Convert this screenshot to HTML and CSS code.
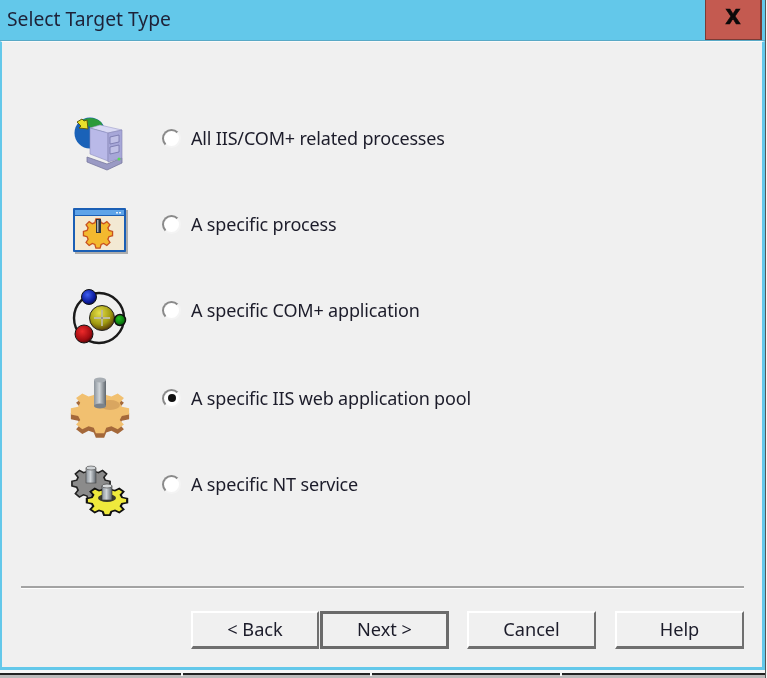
FILE: index.html
```html
<!DOCTYPE html>
<html lang="en">
<head>
<meta charset="utf-8">
<title>Select Target Type</title>
<link rel="stylesheet" href="styles.css">
</head>
<body>
<svg class="defs" width="0" height="0" aria-hidden="true">
  <defs>
    <linearGradient id="pin" x1="0" x2="1" y1="0" y2="0">
      <stop offset="0" stop-color="#8b939b"/><stop offset=".45" stop-color="#cfd4d8"/><stop offset="1" stop-color="#5f666d"/>
    </linearGradient>
    <radialGradient id="ballBlue" cx=".4" cy=".35" r=".7"><stop offset="0" stop-color="#3f5ff0"/><stop offset=".7" stop-color="#0a1a9c"/><stop offset="1" stop-color="#050a40"/></radialGradient>
    <radialGradient id="ballRed" cx=".4" cy=".35" r=".7"><stop offset="0" stop-color="#ee2a2a"/><stop offset=".7" stop-color="#a00b10"/><stop offset="1" stop-color="#400508"/></radialGradient>
    <radialGradient id="ballGreen" cx=".4" cy=".35" r=".7"><stop offset="0" stop-color="#22c022"/><stop offset="1" stop-color="#045a08"/></radialGradient>
    <radialGradient id="ballGold" cx=".4" cy=".3" r=".75"><stop offset="0" stop-color="#e6e04a"/><stop offset=".6" stop-color="#a09a10"/><stop offset="1" stop-color="#4a2a08"/></radialGradient>
    <path id="gear8" d="M-4-25h8l2 7 5 2 6-4 6 6-4 6 2 5 7 2v8l-7 2-2 5 4 6-6 6-6-4-5 2-2 7h-8l-2-7-5-2-6 4-6-6 4-6-2-5-7-2v-8l7-2 2-5-4-6 6-6 6 4 5-2z"/>
  </defs>
</svg>
<div class="window">
  <header class="titlebar">
    <h1 class="title">Select Target Type</h1>
    <div class="close">x</div>
  </header>
  <main class="panel">
    <div class="options">
      <div class="option">
        <svg class="icon" viewBox="0 0 56 56">
          <circle cx="18" cy="17" r="15.500" fill="#1a62b8"/>
          <path d="M9 5c6-4 14-4 20 1l4 8-10 3-6-7-9 1z" fill="#2c9a3a"/>
          <path d="M5 6l5-3 2 2 3-1 1 9-9-1 2-2z" fill="#e9e02c" stroke="#5f5c10" stroke-width="1"/>
          <path d="M15 41v5l20 8 15-7v-5l-15 6z" fill="#9a9ac4" stroke="#77779e" stroke-width=".8"/>
          <path d="M18 12l10-3 22 5-14 3z" fill="#d9d9f4" stroke="#9a9ac8" stroke-width=".6"/>
          <path d="M18 12l18 5v28l-18-7z" fill="#b9b9e8" stroke="#8e8ebc" stroke-width=".6"/>
          <path d="M36 17l14-3v28l-14 4z" fill="#a7a7d8" stroke="#8484b4" stroke-width=".6"/>
          <path d="M38 21l9-2v7l-9 2zM38 31l9-2v7l-9 2z" fill="#c0c0e6" stroke="#7474aa" stroke-width=".8"/>
          <circle cx="47" cy="43" r="1.500" fill="#58d858"/>
        </svg>
        <label class="choice"><span class="radio"></span><span>All IIS/COM+ related processes</span></label>
      </div>
      <div class="option">
        <svg class="icon" viewBox="0 0 56 56">
          <rect x="3" y="8" width="53" height="44" fill="#777" opacity=".55"/>
          <rect x="1" y="6" width="53" height="44" rx="1" fill="#1b5fb5"/>
          <rect x="3" y="8" width="49" height="5" fill="#5fa4e8"/>
          <path d="M44 10h2v1.500h-2zM47 10h2v1.500h-2z" fill="#e8f2fb"/>
          <rect x="3" y="14" width="49" height="34" fill="#f3e9d3"/>
          <g transform="translate(26 30) scale(.52)" fill="#f3b92f" stroke="#c8501e" stroke-width="2.500"><use href="#gear8"/></g>
          <rect x="24" y="17" width="5" height="14" fill="#2f343a"/>
          <rect x="25" y="18" width="1.500" height="12" fill="#a8aeb4"/>
        </svg>
        <label class="choice"><span class="radio"></span><span>A specific process</span></label>
      </div>
      <div class="option">
        <svg class="icon" viewBox="0 0 56 56">
          <circle cx="27" cy="30" r="25" fill="none" stroke="#1a1a1a" stroke-width="2.400"/>
          <circle cx="30" cy="30" r="12.500" fill="url(#ballGold)" stroke="#222" stroke-width="1"/>
          <path d="M30 22v16M22 30h16" stroke="#f4f0c8" stroke-width="1.800"/>
          <path d="M30 22v16M22 30h16" stroke="#222" stroke-width=".5"/>
          <circle cx="17" cy="9" r="7.500" fill="url(#ballBlue)" stroke="#111" stroke-width="1"/>
          <circle cx="12" cy="46" r="9" fill="url(#ballRed)" stroke="#111" stroke-width="1"/>
          <circle cx="48" cy="32" r="5.500" fill="url(#ballGreen)" stroke="#111" stroke-width="1.500"/>
        </svg>
        <label class="choice"><span class="radio"></span><span>A specific COM+ application</span></label>
      </div>
      <div class="option option-shifted">
        <svg class="icon" viewBox="0 0 56 56">
          <g transform="translate(28 33) scale(1.040 .780)">
            <g transform="translate(0 6)" fill="#a4683a"><use href="#gear8"/></g>
            <g fill="#f1c070"><use href="#gear8"/></g>
          </g>
          <ellipse cx="38" cy="29" rx="10" ry="5" fill="#d9a660"/>
          <rect x="22" y="4" width="12" height="26" fill="url(#pin)"/>
          <ellipse cx="28" cy="30" rx="6" ry="2.500" fill="#7b828a"/>
          <ellipse cx="28" cy="4" rx="6" ry="2.500" fill="#a7adb3"/>
        </svg>
        <label class="choice"><span class="radio radio-on"></span><span>A specific IIS web application pool</span></label>
      </div>
      <div class="option">
        <svg class="icon" viewBox="0 0 56 56">
          <g transform="translate(19 20) scale(.680 .580)" fill="#8b8b8b" stroke="#222" stroke-width="2.500"><use href="#gear8"/></g>
          <rect x="14" y="6" width="10" height="15" fill="url(#pin)" stroke="#444" stroke-width=".6"/>
          <ellipse cx="19" cy="6" rx="5" ry="2" fill="#cfd3d6" stroke="#444" stroke-width=".6"/>
          <g transform="translate(35 37) scale(.720 .520)" fill="#efe93c" stroke="#111" stroke-width="3"><use href="#gear8"/></g>
          <ellipse cx="35" cy="36" rx="9" ry="4" fill="#3a3a2a"/>
          <rect x="30" y="24" width="10" height="14" fill="url(#pin)" stroke="#333" stroke-width=".6"/>
          <ellipse cx="35" cy="24" rx="5" ry="2" fill="#d5d8da" stroke="#333" stroke-width=".6"/>
        </svg>
        <label class="choice"><span class="radio"></span><span>A specific NT service</span></label>
      </div>
    </div>
    <div class="footer">
      <hr class="rule">
      <div class="buttons">
        <div class="pair">
          <button class="btn btn-back" type="button">&lt; Back</button>
          <button class="btn btn-default" type="button">Next &gt;</button>
        </div>
        <button class="btn" type="button">Cancel</button>
        <button class="btn" type="button">Help</button>
      </div>
    </div>
  </main>
  <div class="base"></div>
</div>
</body>
</html>
```

FILE: styles.css
```css
* { box-sizing: border-box; }
html, body { margin: 0; padding: 0; background: #f6f6f6; }
.defs { position: absolute; }
.window {
  width: 766px;
  height: 678px;
  display: flex;
  flex-direction: column;
  font-family: "Noto Sans", "Open Sans", sans-serif;
  color: #1c1c2a;
  border-right: 1px solid #555;
  filter: blur(.3px);
}
.titlebar {
  height: 41px;
  flex: none;
  display: flex;
  justify-content: space-between;
  background: #63c8ea;
  border-bottom: 1px solid #58a9c6;
  padding-right: 3px;
}
.title {
  margin: 0;
  padding: 6px 0 0 7px;
  font-size: 19.3px;
  line-height: 26px;
  font-weight: 400;
  color: #1e2238;
}
.close {
  width: 57px;
  height: 40px;
  background: #c45a50;
  border: 1px solid #7b3b35;
  border-width: 0 2px 1px 1px;
  text-align: center;
  font-family: "Liberation Sans", sans-serif;
  font-weight: 700;
  font-size: 27px;
  line-height: 31px;
  color: #0c0a0a;
  -webkit-text-stroke: .6px #0c0a0a;
}
.panel {
  flex: none;
  height: 629px;
  display: flex;
  flex-direction: column;
  justify-content: space-between;
  background: #f0f0f0;
  border: 2px solid #63c8ea;
  border-top: 1px solid #fafafa;
  border-right-width: 3px;
  border-bottom-width: 3px;
}
.options {
  padding: 53px 0 0 70px;
  display: flex;
  flex-direction: column;
}
.option {
  height: 86px;
  display: flex;
  align-items: center;
}
.option-shifted { margin-top: 2px; }
.icon {
  width: 56px;
  height: 56px;
  flex: none;
  margin-top: 12px;
  overflow: visible;
  filter: blur(.3px);
}
.choice {
  display: flex;
  align-items: center;
  margin-left: 34px;
  font-size: 18px;
  line-height: 24px;
  letter-spacing: -.17px;
}
.radio {
  width: 19px;
  height: 19px;
  flex: none;
  margin-right: 10px;
  border-radius: 50%;
  background: #fff;
  border: 2px solid #8a8a8a;
  border-right-color: #f4f4f4;
  border-bottom-color: #f4f4f4;
  display: flex;
  align-items: center;
  justify-content: center;
}
.radio-on::after {
  content: "";
  width: 8px;
  height: 8px;
  border-radius: 50%;
  background: #111;
}
.footer {
  padding: 0 18px 18px 19px;
}
.rule {
  margin: 0 0 23px;
  height: 2px;
  border: 0;
  background: #a3a3a3;
  box-shadow: 0 1px 0 #fff;
}
.buttons {
  display: flex;
  justify-content: flex-end;
  gap: 19px;
}
.pair { display: flex; margin-right: -1px; }
.btn {
  width: 129px;
  height: 38px;
  padding: 0 0 2px;
  font: inherit;
  font-size: 18.2px;
  color: #1c1c2a;
  background: #f0f0f0;
  border: 2px solid #fff;
  border-right-color: #6f6f6f;
  border-bottom-color: #6f6f6f;
  border-bottom-width: 3px;
}
.btn-back { width: 128px; margin-right: 1px; }
.btn-default {
  border: 3px solid #6a6a6a;
  width: 129px;
}
.base {
  flex: 1;
  background:
    linear-gradient(#f6f6f6, #f6f6f6) 181px 3px / 2px 3px no-repeat,
    linear-gradient(#f6f6f6, #f6f6f6) 370px 3px / 2px 3px no-repeat,
    linear-gradient(#f6f6f6, #f6f6f6) 560px 3px / 2px 3px no-repeat,
    linear-gradient(#f6f6f6 0 3px, #222 3px 5px, #bbb 5px);
}
```
